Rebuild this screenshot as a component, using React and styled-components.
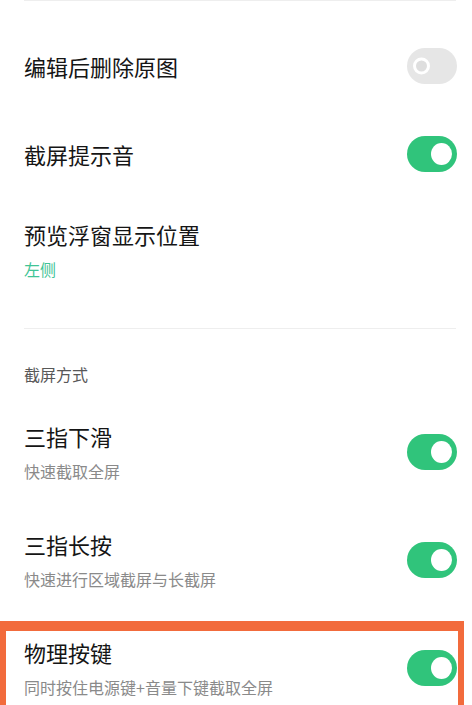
import React from "react";
import styled, { createGlobalStyle } from "styled-components";

const GlobalStyle = createGlobalStyle`
    body {
        margin: 0;
        background: #ffffff;
        font-family: "Noto Sans CJK SC", "Noto Sans", sans-serif;
    }
`

const Page = styled.div`
    width: 472px;
    height: 705px;
    overflow: hidden;
    background: #ffffff;
`

const Divider = styled.div`
    height: 1px;
    background: #eeeeee;
    margin: ${props => props.$top || 0}px 16px 0 24px;
`

const List = styled.div`
    padding-top: ${props => props.$top || 0}px;
`

const Row = styled.div`
    display: flex;
    align-items: center;
    justify-content: space-between;
    height: 88px;
    box-sizing: border-box;
    padding: 0 15px 0 24px;
`

const TwoLineRow = styled(Row)`
    height: 108px;
    padding-top: 21px;
    padding-bottom: 26px;
`

const MarkedRow = styled(TwoLineRow)`
    height: auto;
    margin: 5px 8px 0 0;
    border: 6px solid #f26b3c;
    border-top-width: 10px;
    border-bottom: none;
    padding: 6px 1px 20px 18px;
`

const TextBlock = styled.div`
    display: flex;
    flex-direction: column;
    gap: 9px;
`

const Title = styled.div`
    font-size: 22px;
    line-height: 30px;
    color: #151515;
`

const Sub = styled.div`
    font-size: 16px;
    line-height: 22px;
    color: ${props => props.$accent ? "#3fc496" : "#8a8a8a"};
`

const SectionHeader = styled.div`
    font-size: 16px;
    line-height: 22px;
    color: #585858;
    padding: 34px 24px 15px;
`

const Track = styled.div`
    position: relative;
    flex-shrink: 0;
    width: 50px;
    height: 36px;
    border-radius: 18px;
    background: ${props => props.$on ? "#30c47b" : "#e6e6e6"};
`

const Knob = styled.div`
    position: absolute;
    top: 50%;
    transform: translateY(-50%);
    border-radius: 50%;
    box-sizing: border-box;
    ${props => props.$on ? `
        right: 5px;
        width: 21px;
        height: 22px;
        background: #ffffff;
    ` : `
        left: 6px;
        width: 17px;
        height: 17px;
        background: #dedede;
        border: 3px solid #ffffff;
    `}
`

const Toggle = ({ on }) => (
    <Track $on={on}>
        <Knob $on={on} />
    </Track>
)

const App = () => {
    return (
        <Page>
            <GlobalStyle />
            <Divider />
            <List $top={21}>
                <Row>
                    <Title>编辑后删除原图</Title>
                    <Toggle on={false} />
                </Row>
                <Row>
                    <Title>截屏提示音</Title>
                    <Toggle on />
                </Row>
                <TwoLineRow>
                    <TextBlock>
                        <Title>预览浮窗显示位置</Title>
                        <Sub $accent>左侧</Sub>
                    </TextBlock>
                </TwoLineRow>
            </List>
            <Divider $top={22} />
            <SectionHeader>截屏方式</SectionHeader>
            <List>
                <TwoLineRow>
                    <TextBlock>
                        <Title>三指下滑</Title>
                        <Sub>快速截取全屏</Sub>
                    </TextBlock>
                    <Toggle on />
                </TwoLineRow>
                <TwoLineRow>
                    <TextBlock>
                        <Title>三指长按</Title>
                        <Sub>快速进行区域截屏与长截屏</Sub>
                    </TextBlock>
                    <Toggle on />
                </TwoLineRow>
                <MarkedRow>
                    <TextBlock>
                        <Title>物理按键</Title>
                        <Sub>同时按住电源键+音量下键截取全屏</Sub>
                    </TextBlock>
                    <Toggle on />
                </MarkedRow>
            </List>
        </Page>
    )
};

export default App;
